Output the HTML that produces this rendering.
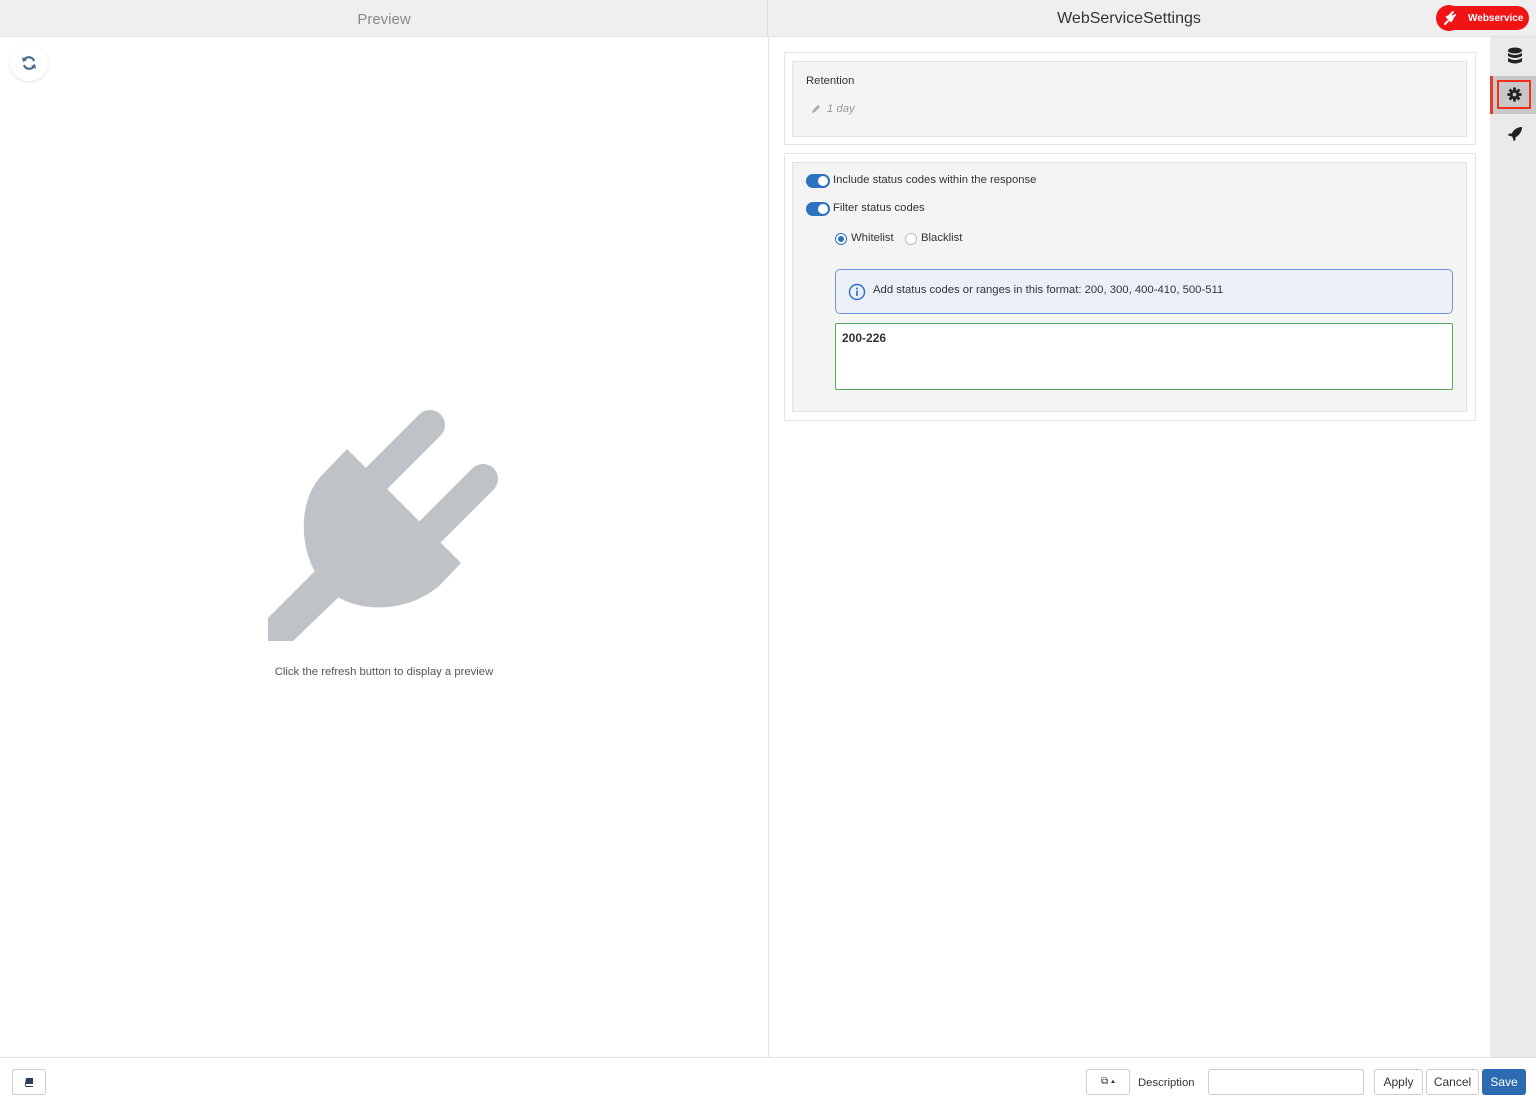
<!DOCTYPE html>
<html><head><meta charset="utf-8">
<style>
*{box-sizing:border-box;margin:0;padding:0}
body{width:1536px;height:1104px;position:relative;overflow:hidden;background:#fff;font-family:"Liberation Sans",sans-serif;color:#333}
.abs{position:absolute}
.hdr{top:0;height:37px;background:#efefef;border-bottom:1px solid #e2e2e2}
.tog{position:absolute;width:24px;height:14px;border-radius:7px;background:#2d72c2}
.tog:after{content:"";position:absolute;right:2px;top:2px;width:10px;height:10px;border-radius:50%;background:#fff}
.btn{position:absolute;top:1069px;height:26px;border:1px solid #ccc;border-radius:3px;background:#fff;font-size:12px;color:#333;text-align:center;line-height:24px}
.t{font-size:11.3px}
</style></head><body>
<div class="abs hdr" style="left:0;width:768px;border-right:1px solid #ddd"></div>
<div class="abs" style="left:0;width:768px;top:11px;text-align:center;font-size:15px;color:#8a8a8a">Preview</div>
<div class="abs hdr" style="left:768px;width:768px"></div>
<div class="abs" style="left:768px;width:722px;top:10px;text-align:center;font-size:16px;color:#333">WebServiceSettings</div>
<div class="abs" style="left:1437px;top:6px;width:92px;height:24px;background:#f01414;border-radius:12px"></div>
<div class="abs" style="left:1436px;top:5px;width:26px;height:26px;border-radius:50%;background:#f01414"></div>
<svg class="abs" style="left:1442px;top:10px" width="16" height="16" viewBox="0 0 16 16"><path d="M3 14 L6 11 M5 7 L9 11 C11 9 11 7 9 5 L5 7Z M8 5 L11 2 M10 8 L13 5" stroke="#fff" stroke-width="2" fill="#fff" stroke-linecap="round"/></svg>
<div class="abs" style="left:1468px;top:13px;font-size:10px;color:#fff;font-weight:bold">Webservice</div>

<div class="abs" style="left:768px;top:37px;width:1px;height:1020px;background:#e2e2e2"></div>
<div class="abs" style="left:1490px;top:37px;width:46px;height:1020px;background:#eaeaea"></div>
<svg class="abs" style="left:1507px;top:47px" width="16" height="18" viewBox="0 0 16 18"><ellipse cx="8" cy="3.5" rx="7" ry="3" fill="#222"/><path d="M1 6 Q8 10 15 6 V9 Q8 13 1 9Z M1 11 Q8 15 15 11 V14.5 Q8 18.5 1 14.5Z" fill="#222"/></svg>
<div class="abs" style="left:1490px;top:76px;width:46px;height:38px;background:#c8c8c8"></div>
<div class="abs" style="left:1490px;top:76px;width:3px;height:38px;background:#e8392d"></div>
<div class="abs" style="left:1497px;top:80px;width:34px;height:29px;border:2px solid #f0301c"></div>
<svg class="abs" style="left:1507px;top:87px" width="15" height="15" viewBox="0 0 16 16"><g fill="#222"><circle cx="8" cy="8" r="5"/><rect x="6.5" y="0.5" width="3" height="15"/><rect x="0.5" y="6.5" width="15" height="3"/><rect x="6.5" y="0.5" width="3" height="15" transform="rotate(45 8 8)"/><rect x="6.5" y="0.5" width="3" height="15" transform="rotate(-45 8 8)"/></g><circle cx="8" cy="8" r="2" fill="#c8c8c8"/></svg>
<svg class="abs" style="left:1508px;top:126px" width="15" height="15" viewBox="0 0 16 16"><path d="M15 1 C10 1 6 4 4 8 L1 8 L0 10 L4 11 L5 12 L6 16 L8 15 L8 12 C12 10 15 6 15 1Z" fill="#222"/></svg>

<div class="abs" style="left:10px;top:45px;width:38px;height:36px;border-radius:50%;background:#fff;box-shadow:0 1px 3px rgba(0,0,0,.12)"></div>
<svg class="abs" style="left:21px;top:55px" width="16" height="16" viewBox="0 0 16 16"><path d="M13 6 A5.5 5.5 0 0 0 3 5" stroke="#4a6c8c" stroke-width="2.2" fill="none"/><path d="M1 2 L2 7 L6 5Z" fill="#4a6c8c"/><path d="M3 10 A5.5 5.5 0 0 0 13 11" stroke="#4a6c8c" stroke-width="2.2" fill="none"/><path d="M15 14 L14 9 L10 11Z" fill="#4a6c8c"/></svg>
<svg class="abs" style="left:0;top:0" width="768" height="700">
<g fill="#bfc3c8">
<line x1="430" y1="425" x2="370" y2="485" stroke="#bfc3c8" stroke-width="30" stroke-linecap="round"/>
<line x1="483" y1="479" x2="423" y2="539" stroke="#bfc3c8" stroke-width="30" stroke-linecap="round"/>
<path d="M347,449 L461,563 L440,585 C410,612 360,615 330,592 C298,562 294,500 325,472 Z"/>
<path d="M318,568 L342,594 L293,641 L268,641 L268,618 Z"/>
</g>
</svg>
<div class="abs" style="left:0;width:768px;top:666px;text-align:center;font-size:11.3px;color:#555">Click the refresh button to display a preview</div>

<div class="abs" style="left:784px;top:52px;width:692px;height:93px;border:1px solid #e6e6e6;background:#fff"></div>
<div class="abs" style="left:792px;top:61px;width:675px;height:76px;border:1px solid #e3e3e3;background:#f4f4f4"></div>
<div class="abs t" style="left:806px;top:75px">Retention</div>
<svg class="abs" style="left:811px;top:104px" width="10" height="10" viewBox="0 0 10 10"><path d="M1 9 L2 6 L7 1 L9 3 L4 8Z" fill="#aaa"/></svg>
<div class="abs t" style="left:827px;top:103px;color:#999;font-style:italic">1 day</div>

<div class="abs" style="left:784px;top:153px;width:692px;height:268px;border:1px solid #e6e6e6;background:#fff"></div>
<div class="abs" style="left:792px;top:162px;width:675px;height:250px;border:1px solid #e3e3e3;background:#f4f4f4"></div>
<div class="tog" style="left:806px;top:174px"></div>
<div class="abs t" style="left:833px;top:174px">Include status codes within the response</div>
<div class="tog" style="left:806px;top:202px"></div>
<div class="abs t" style="left:833px;top:202px">Filter status codes</div>
<div class="abs" style="left:835px;top:233px;width:12px;height:12px;border-radius:50%;border:1px solid #2d72c2;background:#fff"><div style="margin:2px;width:6px;height:6px;border-radius:50%;background:#2d72c2"></div></div>
<div class="abs t" style="left:851px;top:232px">Whitelist</div>
<div class="abs" style="left:905px;top:233px;width:12px;height:12px;border-radius:50%;border:1px solid #bbb;background:#fff"></div>
<div class="abs t" style="left:921px;top:232px">Blacklist</div>
<div class="abs" style="left:835px;top:269px;width:618px;height:45px;border:1px solid #6f97d8;border-radius:5px;background:#ebf0f8"></div>
<svg class="abs" style="left:848px;top:283px" width="18" height="18" viewBox="0 0 18 18"><circle cx="9" cy="9" r="7.5" stroke="#2d6bc4" stroke-width="1.4" fill="none"/><circle cx="9" cy="5.5" r="1" fill="#2d6bc4"/><rect x="8.2" y="7.5" width="1.6" height="5.5" fill="#2d6bc4"/></svg>
<div class="abs t" style="left:873px;top:284px">Add status codes or ranges in this format: 200, 300, 400-410, 500-511</div>
<div class="abs" style="left:835px;top:323px;width:618px;height:67px;border:1px solid #5aa85a;border-radius:2px;background:#fff"></div>
<div class="abs" style="left:842px;top:331px;font-size:12px;font-weight:bold;color:#333">200-226</div>

<div class="abs" style="left:0;top:1057px;width:1536px;height:47px;background:#fff;border-top:1px solid #e2e2e2"></div>
<div class="btn" style="left:12px;width:34px"><svg width="10" height="10" viewBox="0 0 10 10" style="margin-top:7px"><path d="M2 1 H9 V7 H2 Q1 8 2 9 H9 V10 H2 Q0 9 1 7Z" fill="#2a3f5a"/></svg></div>
<div class="btn" style="left:1086px;width:44px;font-size:10px">⧉ ▴</div>
<div class="abs t" style="left:1138px;top:1077px">Description</div>
<div class="btn" style="left:1208px;width:156px"></div>
<div class="btn" style="left:1374px;width:49px">Apply</div>
<div class="btn" style="left:1426px;width:53px">Cancel</div>
<div class="btn" style="left:1482px;width:44px;background:#2c6bb2;border-color:#2c6bb2;color:#fff">Save</div>
</body></html>
